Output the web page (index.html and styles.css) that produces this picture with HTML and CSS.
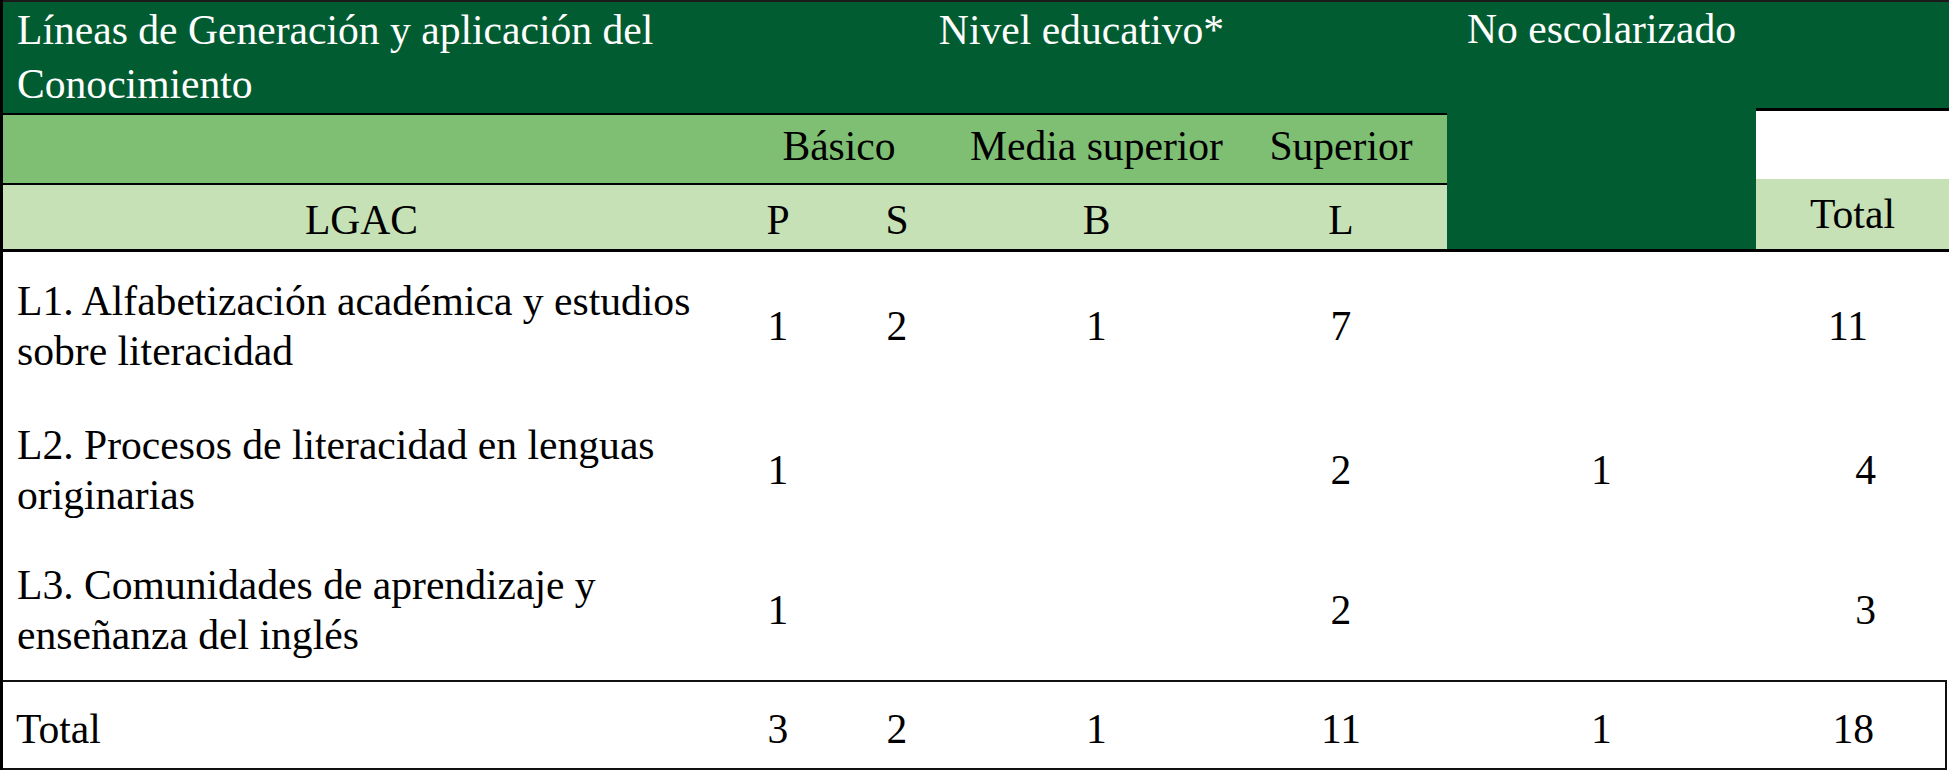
FILE: index.html
```html
<!DOCTYPE html>
<html lang="es">
<head>
<meta charset="utf-8">
<title>LGAC</title>
<link rel="stylesheet" href="styles.css">
</head>
<body>
<div class="table">
  <div class="head">
    <div class="cell dark r1 title">Líneas de Generación y aplicación del<br>Conocimiento</div>
    <div class="cell dark r1 nivel">Nivel educativo*</div>
    <div class="cell dark noesc">No escolarizado</div>
    <div class="cell totcol">
      <div class="tot-dark"></div>
      <div class="tot-white"></div>
      <div class="tot-light">Total</div>
    </div>
    <div class="cell mid r2 c1"></div>
    <div class="cell mid r2 basico">Básico</div>
    <div class="cell mid r2 media">Media superior</div>
    <div class="cell mid r2 sup">Superior</div>
    <div class="cell light r3 lgac">LGAC</div>
    <div class="cell light r3">P</div>
    <div class="cell light r3">S</div>
    <div class="cell light r3">B</div>
    <div class="cell light r3">L</div>
  </div>

  <div class="row row-first">
    <div class="name">L1. Alfabetización académica y estudios<br>sobre literacidad</div>
    <div class="num">1</div>
    <div class="num">2</div>
    <div class="num">1</div>
    <div class="num">7</div>
    <div class="num"></div>
    <div class="num tot tot-wide">11</div>
  </div>
  <div class="row">
    <div class="name">L2. Procesos de literacidad en lenguas<br>originarias</div>
    <div class="num">1</div>
    <div class="num"></div>
    <div class="num"></div>
    <div class="num">2</div>
    <div class="num">1</div>
    <div class="num tot">4</div>
  </div>
  <div class="row">
    <div class="name">L3. Comunidades de aprendizaje y<br>enseñanza del inglés</div>
    <div class="num">1</div>
    <div class="num"></div>
    <div class="num"></div>
    <div class="num">2</div>
    <div class="num"></div>
    <div class="num tot">3</div>
  </div>
  <div class="row row-total">
    <div class="name">Total</div>
    <div class="num">3</div>
    <div class="num">2</div>
    <div class="num">1</div>
    <div class="num">11</div>
    <div class="num">1</div>
    <div class="num tot">18</div>
  </div>
</div>
</body>
</html>
```

FILE: styles.css
```css
* {
  box-sizing: border-box;
}

html, body {
  margin: 0;
  padding: 0;
  background: #ffffff;
}

body {
  font-family: "Liberation Serif", "Times New Roman", serif;
  font-size: 41.6px;
  color: #000000;
  width: 1953px;
  height: 771px;
  overflow: hidden;
}

.table {
  width: 1949px;
  border-left: 3px solid #000;
}

.head {
  display: grid;
  grid-template-columns: 717px 116px 122px 277px 212px 309px 193px;
  grid-template-rows: 113px 70px 64px;
  border-top: 2px solid #1a1a1a;
  border-bottom: 3px solid #000;
}

.cell {
  display: flex;
  align-items: center;
  justify-content: center;
}

.dark {
  background: #015c31;
  color: #ffffff;
}

.mid {
  background: #7fbf74;
}

.light {
  background: #c5e1b5;
}

.r1 {
  border-bottom: 2px solid #000;
  align-items: flex-start;
}

.r2 {
  border-bottom: 2px solid #000;
  padding-bottom: 6px;
}

.r3 {
  padding-top: 6px;
}

.title {
  grid-column: 1;
  grid-row: 1;
  justify-content: flex-start;
  padding: 1px 0 0 14px;
  line-height: 54px;
}

.nivel {
  grid-column: 2 / 6;
  grid-row: 1;
  padding: 1px 4px 0 0;
  line-height: 54px;
}

.noesc {
  grid-column: 6;
  grid-row: 1 / 4;
  align-items: flex-start;
  padding-top: 0;
  line-height: 54px;
}

.totcol {
  grid-column: 7;
  grid-row: 1 / 4;
  display: flex;
  flex-direction: column;
  align-items: stretch;
}

.tot-dark {
  height: 109px;
  background: #015c31;
  border-bottom: 3px solid #000;
}

.tot-white {
  height: 68px;
  background: #ffffff;
}

.tot-light {
  flex: 1;
  background: #c5e1b5;
  display: flex;
  align-items: center;
  justify-content: center;
}

.c1 {
  grid-column: 1;
}

.basico {
  grid-column: 2 / 4;
}

.media {
  grid-column: 4;
}

.sup {
  grid-column: 5;
}

.lgac {
  grid-column: 1;
}

.row {
  display: grid;
  grid-template-columns: 717px 116px 122px 277px 212px 309px 193px;
  height: 140px;
  align-items: center;
  line-height: 50px;
}

.row-first {
  height: 148px;
}

.name {
  padding-left: 14px;
  white-space: nowrap;
}

.num {
  text-align: center;
}

.num.tot {
  text-align: right;
  padding-right: 73px;
}

.num.tot-wide {
  padding-right: 81px;
}

.row-total {
  height: 90px;
  padding-top: 8px;
  border-top: 2px solid #111;
  border-right: 2px solid #111;
  border-bottom: 2px solid #111;
  margin-right: 2px;
  grid-template-columns: 717px 116px 122px 277px 212px 309px 189px;
}

.row-total .name {
  padding-left: 13px;
}

.row-total .num.tot {
  padding-right: 71px;
}
```
